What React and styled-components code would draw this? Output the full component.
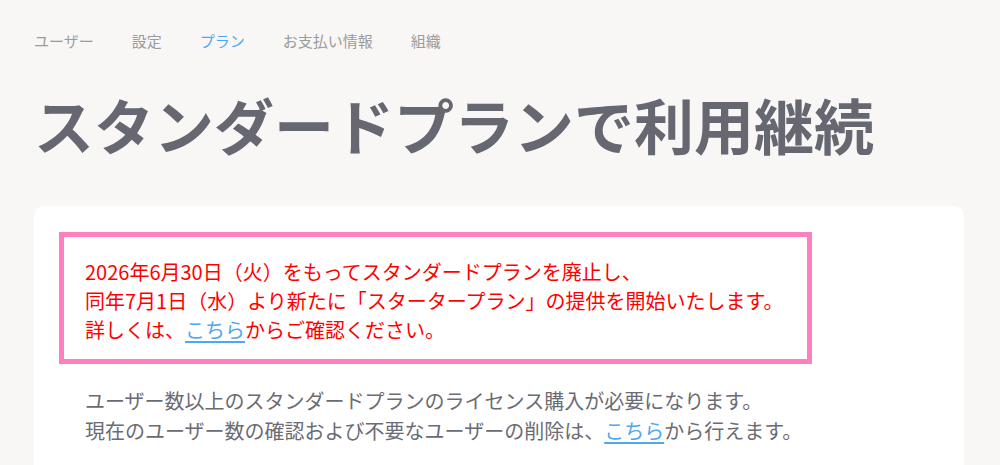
import React from 'react';
import styled, { createGlobalStyle } from 'styled-components';

const GlobalStyle = createGlobalStyle`
  html, body {
    margin: 0;
    padding: 0;
    background-color: #f8f7f5;
    font-family: "Noto Sans CJK JP", "Noto Sans", sans-serif;
  }
`;

const Page = styled.div`
  padding: 30px 36px 0 34px;
  height: 465px;
  box-sizing: border-box;
  overflow: hidden;
`;

const Nav = styled.nav`
  display: flex;
  gap: 38px;
`;

const NavItem = styled.a`
  font-size: 15px;
  line-height: 22px;
  color: ${(p) => (p.$active ? '#4fa7f3' : '#9b9b9b')};
  text-decoration: none;
`;

const Title = styled.h1`
  margin: 31px 0 0;
  font-size: 60px;
  line-height: 82px;
  font-weight: 700;
  color: #666771;
  letter-spacing: 0;
`;

const Card = styled.div`
  margin-top: 41px;
  background-color: #ffffff;
  border-radius: 10px;
  padding: 26px 25px;
  min-height: 300px;
`;

const Notice = styled.div`
  display: inline-block;
  border: 5px solid #ff7fbf;
  padding: 20px 23px 15px 21px;
  font-size: 20px;
  line-height: 29px;
  color: #ff0000;
`;

const Description = styled.p`
  margin: 22px 0 0;
  padding-left: 26px;
  font-size: 20px;
  line-height: 30px;
  color: #6b6b73;
`;

const Link = styled.a`
  color: #4fa7f3;
  text-decoration: underline;
  text-underline-offset: 3px;
`;

const App = () => {
  return (
    <>
      <GlobalStyle />
      <Page>
        <Nav>
          <NavItem>ユーザー</NavItem>
          <NavItem>設定</NavItem>
          <NavItem $active>プラン</NavItem>
          <NavItem>お支払い情報</NavItem>
          <NavItem>組織</NavItem>
        </Nav>
        <Title>スタンダードプランで利用継続</Title>
        <Card>
          <Notice>
            2026年6月30日（火）をもってスタンダードプランを廃止し、
            <br />
            同年7月1日（水）より新たに「スタータープラン」の提供を開始いたします。
            <br />
            詳しくは、<Link>こちら</Link>からご確認ください。
          </Notice>
          <Description>
            ユーザー数以上のスタンダードプランのライセンス購入が必要になります。
            <br />
            現在のユーザー数の確認および不要なユーザーの削除は、<Link>こちら</Link>から行えます。
          </Description>
        </Card>
      </Page>
    </>
  );
};

export default App;
